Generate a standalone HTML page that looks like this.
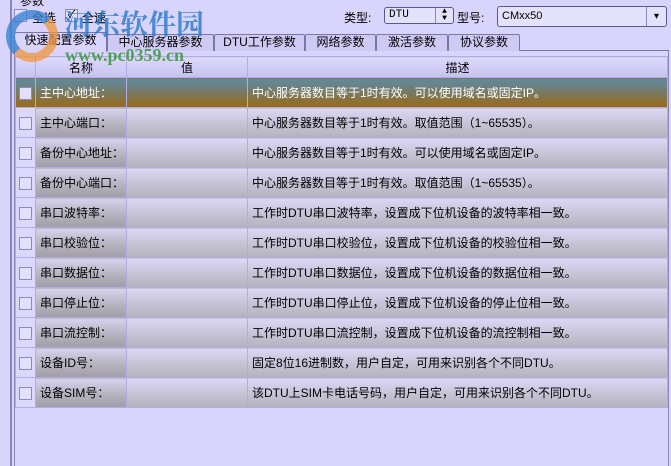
<!DOCTYPE html>
<html><head><meta charset="utf-8"><style>
*{margin:0;padding:0;box-sizing:border-box}
body{width:671px;height:466px;background:#d8d4fb;font-family:"Liberation Sans","Noto Sans CJK SC",sans-serif;font-size:12px;color:#000;position:relative;overflow:hidden}
.abs{position:absolute}
.cb{position:absolute;width:13px;height:13px;border:1px solid #8e88c8;background:#e4e2fb}
.tab{position:absolute;top:34px;height:17px;border:1px solid #7a76a8;border-bottom:none;background:#cfcaf4;font-size:12px;line-height:15px;text-align:center;border-radius:2px 2px 0 0}
table{position:absolute;left:15px;top:56px;border-collapse:collapse;width:653px}
td{border:1px solid #b0aee0;height:30px;padding:0 0 0 4px;background:linear-gradient(#dcd8f7,#c3c0d2 60%,#b5b2bf)}
td.n{background:linear-gradient(#d6d3ee,#b4b0bc 60%,#a09ca8)}
td.c{width:20px;background:#dcd8fb;padding:0}
tr.h td{height:21px;background:linear-gradient(#dcd8fb,#c6c2f0);text-align:center;padding:0}
tr.s td{background:linear-gradient(#5e8aa6,#7a7860 50%,#9a6a14);color:#fff}
tr.s td.c{background:linear-gradient(#5e8aa6,#9a6a14)}
.cb2{display:inline-block;width:13px;height:13px;border:1px solid #8e88c8;background:#e2e0fb;vertical-align:middle;margin-left:3px}
</style></head><body>
<div class="abs" style="left:20px;top:-8px;font-size:12px">参数</div>
<div class="abs" style="left:10px;top:0;width:2px;height:466px;border-left:1px solid #8a86b8;border-right:1px solid #8a86b8"></div>
<div class="abs" style="left:14px;top:51px;width:1px;height:415px;background:#8a86b8"></div>
<div class="abs" style="left:668px;top:51px;width:1px;height:415px;background:#8a86b8"></div>
<div class="cb" style="left:14px;top:9px"></div><div class="abs" style="left:32px;top:9px">全选</div>
<div class="cb" style="left:65px;top:9px;font-size:11px;line-height:11px;text-align:center">✓</div><div class="abs" style="left:82px;top:9px">全速</div>
<div class="abs" style="left:344px;top:9px">类型:</div>
<div class="abs" style="left:384px;top:7px;width:70px;height:17px;border:1px solid #5a5690;border-radius:3px;background:#e4e2fb;font-family:'Liberation Mono',monospace;font-size:11px;line-height:15px;padding-left:4px">DTU<span style="position:absolute;right:0;top:0;width:18px;height:15px;border-left:1px solid #8a86b8;text-align:center;font-size:8px;line-height:7px">▲<br>▼</span></div>
<div class="abs" style="left:457px;top:9px">型号:</div>
<div class="abs" style="left:497px;top:6px;width:170px;height:21px;border:1px solid #5a5690;border-radius:3px;background:#e4e2fb;font-size:11px;line-height:19px;padding-left:4px">CMxx50<span style="position:absolute;right:0;top:0;width:20px;height:19px;border-left:1px solid #8a86b8;text-align:center;font-size:10px">▾</span></div>
<div class="abs" style="left:14px;top:50px;width:655px;height:1px;background:#7a76a8"></div>
<div class="tab" style="left:14px;top:32px;width:93px;height:20px;background:#d8d4fb;border-bottom:none">快速配置参数</div>
<div class="tab" style="left:107px;width:107px">中心服务器参数</div>
<div class="tab" style="left:214px;width:91px">DTU工作参数</div>
<div class="tab" style="left:305px;width:71px">网络参数</div>
<div class="tab" style="left:376px;width:72px">激活参数</div>
<div class="tab" style="left:448px;width:72px">协议参数</div>
<table>
<tr class="h"><td class="c"></td><td style="width:91px">名称</td><td style="width:121px">值</td><td>描述</td></tr>
<tr class="s"><td class="c"><span class="cb2"></span></td><td class="n">主中心地址：</td><td></td><td>中心服务器数目等于1时有效。可以使用域名或固定IP。</td></tr>
<tr><td class="c"><span class="cb2"></span></td><td class="n">主中心端口：</td><td></td><td>中心服务器数目等于1时有效。取值范围（1~65535）。</td></tr>
<tr><td class="c"><span class="cb2"></span></td><td class="n">备份中心地址：</td><td></td><td>中心服务器数目等于1时有效。可以使用域名或固定IP。</td></tr>
<tr><td class="c"><span class="cb2"></span></td><td class="n">备份中心端口：</td><td></td><td>中心服务器数目等于1时有效。取值范围（1~65535）。</td></tr>
<tr><td class="c"><span class="cb2"></span></td><td class="n">串口波特率：</td><td></td><td>工作时DTU串口波特率，设置成下位机设备的波特率相一致。</td></tr>
<tr><td class="c"><span class="cb2"></span></td><td class="n">串口校验位：</td><td></td><td>工作时DTU串口校验位，设置成下位机设备的校验位相一致。</td></tr>
<tr><td class="c"><span class="cb2"></span></td><td class="n">串口数据位：</td><td></td><td>工作时DTU串口数据位，设置成下位机设备的数据位相一致。</td></tr>
<tr><td class="c"><span class="cb2"></span></td><td class="n">串口停止位：</td><td></td><td>工作时DTU串口停止位，设置成下位机设备的停止位相一致。</td></tr>
<tr><td class="c"><span class="cb2"></span></td><td class="n">串口流控制：</td><td></td><td>工作时DTU串口流控制，设置成下位机设备的流控制相一致。</td></tr>
<tr><td class="c"><span class="cb2"></span></td><td class="n">设备ID号：</td><td></td><td>固定8位16进制数，用户自定，可用来识别各个不同DTU。</td></tr>
<tr><td class="c"><span class="cb2"></span></td><td class="n">设备SIM号：</td><td></td><td>该DTU上SIM卡电话号码，用户自定，可用来识别各个不同DTU。</td></tr>
</table>
<div class="abs" style="left:6px;top:10px;width:52px;height:52px;border-radius:50%;border:9px solid rgba(240,150,60,.75);border-left-color:rgba(60,130,210,.8);border-top-color:rgba(60,130,210,.8)"></div>
<div class="abs" style="left:64px;top:6px;font-size:28px;font-weight:bold;color:rgba(40,120,200,.8);font-family:'Noto Serif CJK SC',serif;line-height:34px">河东软件园</div>
<div class="abs" style="left:65px;top:45px;font-size:18px;font-weight:bold;color:rgba(60,150,60,.85);font-family:'Liberation Serif',serif">www.pc0359.cn</div>
</body></html>
